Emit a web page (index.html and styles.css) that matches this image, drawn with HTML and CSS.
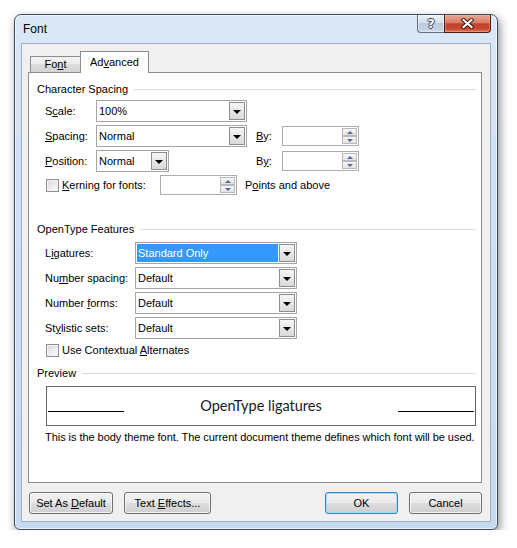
FILE: index.html
```html
<!DOCTYPE html>
<html>
<head>
<meta charset="utf-8">
<title>Font</title>
<link rel="stylesheet" href="styles.css">
</head>
<body>
<div class="screen">
  <div class="window">
    <div class="titlebar">
      <span class="title">Font</span>
      <div class="caption-btns">
        <div class="cap help"><span>?</span></div>
        <div class="cap close">
          <svg width="13" height="11" viewBox="0 0 13 11">
            <path d="M2.5 2 L10.5 9 M10.5 2 L2.5 9" stroke="#3b1109" stroke-width="4" stroke-linecap="square" fill="none"/>
            <path d="M2.5 2 L10.5 9 M10.5 2 L2.5 9" stroke="#ffffff" stroke-width="2.2" stroke-linecap="square" fill="none"/>
          </svg>
        </div>
      </div>
    </div>

    <div class="client">
      <div class="tabstrip">
        <div class="tab">Fo<u>n</u>t</div>
        <div class="tab active">Ad<u>v</u>anced</div>
      </div>

      <div class="page">
        <div class="group-head"><span>Character Spacing</span><i class="rule"></i></div>

        <div class="cs-grid">
          <span class="lbl">S<u>c</u>ale:</span>
          <div class="combo w151"><span class="val">100%</span><span class="drop"></span></div>
          <span></span><span></span>

          <span class="lbl"><u>S</u>pacing:</span>
          <div class="combo w151"><span class="val">Normal</span><span class="drop"></span></div>
          <span class="lbl"><u>B</u>y:</span>
          <div class="spin"><span class="spin-btns"><i class="up"></i><i class="down"></i></span></div>

          <span class="lbl"><u>P</u>osition:</span>
          <div class="combo w73"><span class="val">Normal</span><span class="drop"></span></div>
          <span class="lbl">B<u>y</u>:</span>
          <div class="spin"><span class="spin-btns"><i class="up"></i><i class="down"></i></span></div>
        </div>

        <div class="kern-row">
          <span class="chk"></span>
          <span class="kern-lbl"><u>K</u>erning for fonts:</span>
          <div class="spin"><span class="spin-btns"><i class="up"></i><i class="down"></i></span></div>
          <span class="pts">P<u>o</u>ints and above</span>
        </div>

        <div class="group-head ot-head"><span>OpenType Features</span><i class="rule"></i></div>

        <div class="ot-grid">
          <span class="lbl">L<u>i</u>gatures:</span>
          <div class="combo w162"><span class="val selected">Standard Only</span><span class="drop"></span></div>

          <span class="lbl">Nu<u>m</u>ber spacing:</span>
          <div class="combo w162"><span class="val">Default</span><span class="drop"></span></div>

          <span class="lbl">Number <u>f</u>orms:</span>
          <div class="combo w162"><span class="val">Default</span><span class="drop"></span></div>

          <span class="lbl">St<u>y</u>listic sets:</span>
          <div class="combo w162"><span class="val">Default</span><span class="drop"></span></div>
        </div>

        <div class="ctx-row">
          <span class="chk"></span>
          <span>Use Contextual <u>A</u>lternates</span>
        </div>

        <div class="group-head preview-head"><span>Preview</span><i class="rule"></i></div>

        <div class="preview">
          <i class="pline"></i>
          <span class="ptext">OpenType ligatures</span>
          <i class="pline"></i>
        </div>
        <div class="caption">This is the body theme font. The current document theme defines which font will be used.</div>
      </div>

      <div class="btn-row">
        <div class="btn b-default">Set As <u>D</u>efault</div>
        <div class="btn b-effects">Text <u>E</u>ffects...</div>
        <div class="spacer"></div>
        <div class="btn b-ok">OK</div>
        <div class="btn b-cancel">Cancel</div>
      </div>
    </div>
  </div>
</div>
</body>
</html>
```
FILE: styles.css
```css
* { box-sizing: border-box; }

body {
  margin: 0;
  background: #ffffff;
  font-family: "Liberation Sans", Arial, sans-serif;
  font-size: 11px;
  color: #000;
}

u { text-decoration: underline; text-underline-offset: 1px; }

.screen { padding: 14px 0 0 14px; }

/* Window frame */
.window {
  width: 484px;
  height: 516px;
  border: 1px solid #414b57;
  border-radius: 7px 7px 6px 6px;
  background: linear-gradient(180deg, #dbe8f6 0%, #cfe0f3 30%, #c6daf0 100%);
  box-shadow: 2px 4px 10px rgba(0, 0, 0, 0.45), inset 0 0 0 1px rgba(255, 255, 255, 0.6);
  display: flex;
  flex-direction: column;
  padding: 0 6px 7px 6px;
}

.titlebar {
  height: 28px;
  display: flex;
  align-items: flex-start;
  flex: none;
}

.title {
  font-size: 12px;
  line-height: 28px;
  margin-left: 2px;
}

.caption-btns { margin-left: auto; display: flex; }

.cap {
  height: 18px;
  display: flex;
  align-items: center;
  justify-content: center;
  border: 1px solid #5f6f84;
  border-top: 0;
}

.help {
  width: 27px;
  border-right: 0;
  border-radius: 0 0 0 4px;
  background: linear-gradient(180deg, #eaf0f7 0%, #d6e0ec 45%, #bccbdd 50%, #c9d7e8 100%);
  box-shadow: inset 0 0 0 1px rgba(255, 255, 255, 0.45);
}

.help span {
  font: bold 13px "DejaVu Sans", sans-serif;
  color: #f4f6f9;
  line-height: 14px;
  margin-top: 1px;
  text-shadow: 1px 0 0 #3c4755, -1px 0 0 #3c4755, 0 1px 0 #3c4755, 0 -1px 0 #3c4755;
}

.close {
  width: 47px;
  border-color: #4e1a12;
  border-radius: 0 0 4px 0;
  background: linear-gradient(180deg, #e7a798 0%, #d97a66 45%, #c2432b 52%, #c9472e 80%, #df7a5c 100%);
  box-shadow: inset 0 0 0 1px rgba(255, 200, 190, 0.35);
}

/* Client area */
.client {
  flex: 1;
  border: 1px solid #9fb0c4;
  background: #f0f0f0;
  padding: 7px 8px 7px 6px;
  display: flex;
  flex-direction: column;
}

.tabstrip {
  height: 21px;
  display: flex;
  align-items: flex-end;
  padding-left: 2px;
  flex: none;
}

.tab {
  width: 51px;
  height: 16px;
  border: 1px solid #898c95;
  border-bottom: 0;
  background: linear-gradient(180deg, #f3f3f3 0%, #ebebeb 50%, #dddddd 50%, #d4d4d4 100%);
  text-align: center;
  line-height: 15px;
}

.tab.active {
  width: 69px;
  height: 22px;
  margin-left: -1px;
  margin-bottom: -1px;
  background: #ffffff;
  line-height: 21px;
  position: relative;
  z-index: 1;
}

.page {
  height: 411px;
  flex: none;
  border: 1px solid #898c95;
  background: #ffffff;
  padding: 0 5px 0 8px;
}

.group-head {
  display: flex;
  align-items: center;
  height: 14px;
  line-height: 14px;
  margin-top: 9px;
}

.rule {
  flex: 1;
  height: 1px;
  background: #d5dfe5;
  margin-left: 6px;
  margin-top: 1px;
}

.lbl { line-height: 14px; }

.cs-grid {
  display: grid;
  grid-template-columns: 51px 160px 26px 77px;
  grid-template-rows: 22px 22px 22px;
  row-gap: 3px;
  align-items: center;
  margin: 4px 0 0 8px;
}

.cs-grid .spin { height: 20px; }

/* Drop-down combo */
.combo {
  height: 22px;
  border: 1px solid #a5a5a5;
  padding: 1px;
  display: flex;
  background: #fff;
}

.w151 { width: 151px; }
.w73 { width: 73px; }
.w162 { width: 162px; }

.combo .val {
  flex: 1;
  padding-left: 1px;
  line-height: 18px;
  white-space: nowrap;
}

.combo .val.selected {
  background: #3399ff;
  color: #fff;
  margin-right: 1px;
}

.drop {
  width: 16px;
  border: 1px solid #8d8d8d;
  background: linear-gradient(180deg, #f6f6f6 0%, #e8e8e8 50%, #d9d9d9 100%);
  display: flex;
  align-items: center;
  justify-content: center;
}

.drop::after {
  content: "";
  border-left: 4px solid transparent;
  border-right: 4px solid transparent;
  border-top: 4px solid #000;
  margin-top: 1px;
}

/* Spin box */
.spin {
  width: 77px;
  height: 20px;
  border: 1px solid #abadb3;
  padding: 1px;
  display: flex;
  justify-content: flex-end;
  background: #fff;
}

.spin-btns {
  width: 15px;
  display: flex;
  flex-direction: column;
}

.spin-btns i {
  flex: 1;
  border: 1px solid #b9b9b9;
  background: linear-gradient(180deg, #f7f7f7, #e2e2e2);
  display: flex;
  align-items: center;
  justify-content: center;
}

.spin-btns .up::after {
  content: "";
  border-left: 3px solid transparent;
  border-right: 3px solid transparent;
  border-bottom: 3px solid #4e6a9c;
}

.spin-btns .down::after {
  content: "";
  border-left: 3px solid transparent;
  border-right: 3px solid transparent;
  border-top: 3px solid #4e6a9c;
}

/* Checkbox */
.chk {
  width: 13px;
  height: 13px;
  border: 1px solid #8e8f8f;
  background: linear-gradient(135deg, #d6d6d6 0%, #f0f0f0 60%, #ffffff 100%);
  box-shadow: inset 0 0 0 1px #f2f2f2;
  flex: none;
}

.kern-row {
  display: flex;
  align-items: center;
  height: 20px;
  margin: 3px 0 0 9px;
}

.kern-lbl { margin-left: 3px; width: 98px; }
.pts { margin-left: 8px; }

.ot-head { margin-top: 27px; }

.ot-grid {
  display: grid;
  grid-template-columns: 90px 162px;
  grid-template-rows: repeat(4, 22px);
  row-gap: 3px;
  align-items: center;
  margin: 6px 0 0 8px;
}

.ctx-row {
  display: flex;
  align-items: center;
  gap: 3px;
  height: 16px;
  margin: 3px 0 0 9px;
}

.preview-head { margin-top: 8px; }

.preview {
  width: 430px;
  height: 40px;
  margin: 6px 0 0 9px;
  border: 1px solid #666666;
  display: flex;
  padding: 0 1px;
}

.pline {
  width: 76px;
  height: 1px;
  background: #000;
  margin-top: 24px;
}

.ptext {
  flex: 1;
  text-align: center;
  font-family: Lato, "Open Sans", sans-serif;
  font-size: 14.5px;
  line-height: 18px;
  margin-top: 10px;
  color: #1a1a1a;
}

.caption {
  margin: 4px 0 0 8px;
  line-height: 14px;
  white-space: nowrap;
  letter-spacing: -0.05px;
}

/* Bottom buttons */
.btn-row {
  display: flex;
  margin-top: 9px;
  height: 22px;
  gap: 11px;
  padding-left: 1px;
  flex: none;
}

.spacer { flex: 1; }

.btn {
  height: 22px;
  border: 1px solid #707070;
  border-radius: 3px;
  background: linear-gradient(180deg, #f2f2f2 0%, #ebebeb 50%, #dddddd 50%, #cfcfcf 100%);
  box-shadow: inset 0 0 0 1px rgba(255, 255, 255, 0.7);
  text-align: center;
  line-height: 20px;
}

.b-default { width: 84px; }
.b-effects { width: 87px; }
.b-ok {
  width: 73px;
  border-color: #3c7fb1;
  box-shadow: inset 0 0 0 1px #9fdcf7;
}
.b-cancel { width: 73px; }
```
